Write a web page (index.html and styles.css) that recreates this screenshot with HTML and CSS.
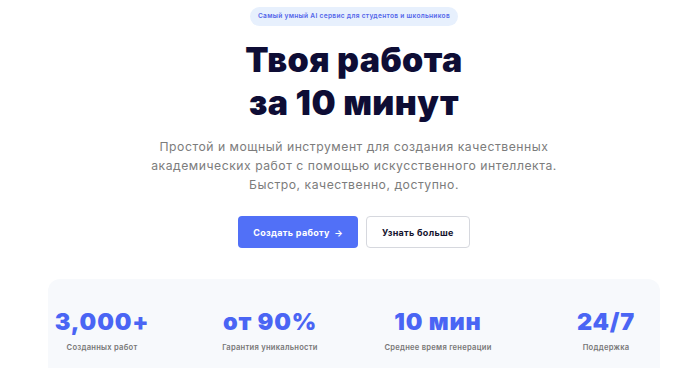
FILE: index.html
```html
<!DOCTYPE html>
<html lang="ru">
<head>
  <meta charset="UTF-8">
  <meta name="viewport" content="width=device-width,initial-scale=1.0">
  <title>Твоя работа за 10 минут</title>
  <link rel="stylesheet" href="styles.css">
</head>
<body>

  <!-- Главный экран -->
  <section class="hero">
    <div class="hero-badge">Самый умный AI сервис для студентов и школьников</div>
    <h1 class="hero-title">Твоя работа<br>за 10 минут</h1>
    <p class="hero-text">
      Простой и мощный инструмент для создания качественных<br>
      академических работ с помощью искусственного интеллекта.<br>
      Быстро, качественно, доступно.
    </p>
    <div class="hero-actions">
      <button class="btn btn-primary">Создать работу <span class="arrow">&rarr;</span></button>
      <button class="btn btn-outline">Узнать больше</button>
    </div>
  </section>

  <!-- Статистика -->
  <section class="stats">
    <div class="stat">
      <div class="stat-value">3,000+</div>
      <div class="stat-label">Созданных работ</div>
    </div>
    <div class="stat">
      <div class="stat-value">от 90%</div>
      <div class="stat-label">Гарантия уникальности</div>
    </div>
    <div class="stat">
      <div class="stat-value">10 мин</div>
      <div class="stat-label">Среднее время генерации</div>
    </div>
    <div class="stat">
      <div class="stat-value">24/7</div>
      <div class="stat-label">Поддержка</div>
    </div>
  </section>

</body>
</html>
```

FILE: styles.css
```css
/* Базовые стили */
* { margin:0; padding:0; box-sizing:border-box; }
body {
  font-family:Inter,'Noto Sans',sans-serif;
  background:#fff; color:#0e0d35;
  display:flex; flex-direction:column; align-items:center;
  padding:7px 0 0 8px;
}

/* Главный экран */
.hero {
  display:flex; flex-direction:column; align-items:center; text-align:center;
}
.hero-badge {
  padding:4px 8px; border-radius:10px;
  background:#e7f0fd; color:#5466ea;
  font-size:6.6px; font-weight:600; line-height:11px; letter-spacing:.3px;
}
.hero-title {
  margin-top:12px;
  font-size:34px; font-weight:900; line-height:43px; letter-spacing:.4px;
  color:#0e0d35;
}
.hero-text {
  margin-top:13px;
  font-size:12.2px; line-height:19px; letter-spacing:.52px;
  color:#7c7c7c; white-space:nowrap;
}
.hero-actions {
  margin-top:22px; display:flex; gap:8px;
}
.btn {
  height:32px; padding:0 15px; border-radius:4px;
  font-family:inherit; font-size:9px; font-weight:700; letter-spacing:.3px; cursor:pointer;
}
.btn-primary { background:#5170f7; color:#fff; border:none; }
.btn-outline { background:#fff; color:#15142f; border:1px solid #d6d8de; }
.arrow { margin-left:2px; }

/* Статистика */
.stats {
  margin-top:31px; width:612px; padding:26px 0 30px;
  background:#f7f9fc; border-radius:12px;
  display:grid; grid-template-columns:repeat(4,108px); justify-content:space-between;
}
.stat { display:flex; flex-direction:column; align-items:center; white-space:nowrap; }
.stat-value {
  font-size:23.5px; font-weight:900; line-height:34px; letter-spacing:.8px; color:#4a65f4;
}
.stat-label {
  margin-top:4px; font-size:7.6px; font-weight:600; letter-spacing:.25px; color:#777;
}
```
